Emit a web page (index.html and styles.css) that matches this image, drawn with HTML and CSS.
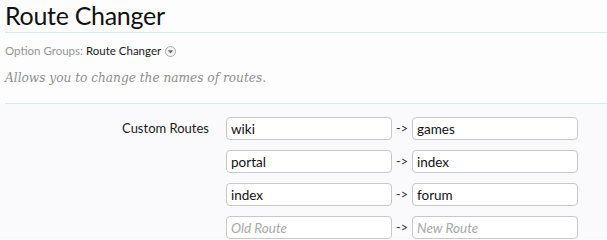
FILE: index.html
```html
<!DOCTYPE html>
<html>
<head>
<meta charset="utf-8">
<link rel="stylesheet" href="styles.css">
</head>
<body>
<div class="page">
  <h1 class="title">Route Changer</h1>
  <div class="groups">
    <span class="muted">Option Groups:</span>
    <span class="current">Route Changer</span>
    <span class="menu-icon"><svg width="11" height="11" viewBox="0 0 11 11"><circle cx="5.5" cy="5.5" r="5" fill="#f4f4f4" stroke="#a8a8a8" stroke-width="1"/><path d="M2.8 4.2 L8.2 4.2 L5.5 7.4 Z" fill="#6a6a6a"/></svg></span>
  </div>
  <p class="desc">Allows you to change the names of routes.</p>
  <div class="form">
    <div class="ctrl-row">
      <div class="label">Custom Routes</div>
      <div class="routes">
        <div class="route"><input class="field" value="wiki"><span class="arrow">-&gt;</span><input class="field" value="games"></div>
        <div class="route"><input class="field" value="portal"><span class="arrow">-&gt;</span><input class="field" value="index"></div>
        <div class="route"><input class="field" value="index"><span class="arrow">-&gt;</span><input class="field" value="forum"></div>
        <div class="route"><input class="field" placeholder="Old Route"><span class="arrow">-&gt;</span><input class="field" placeholder="New Route"></div>
      </div>
    </div>
  </div>
</div>
</body>
</html>
```
FILE: styles.css
```css
html, body {
  margin: 0;
  padding: 0;
  background: #fdfdfe;
  font-family: Lato, "Open Sans", sans-serif;
  color: #141414;
}
.page {
  padding-left: 5px;
}
.title {
  margin: 0;
  font-weight: normal;
  font-size: 25px;
  letter-spacing: -0.3px;
  line-height: 30px;
  height: 32px;
  border-bottom: 1px solid #d8ebf0;
  color: #111;
}
.groups {
  margin-top: 10px;
  font-size: 11.5px;
  line-height: 16px;
  display: flex;
  align-items: center;
  gap: 3px;
}
.muted { color: #969696; }
.current { color: #1a1a1a; }
.menu-icon { display: inline-flex; margin-left: 1px; }
.desc {
  margin: 9px 0 0;
  font-family: "DejaVu Serif Condensed", "DejaVu Serif", serif;
  font-style: italic;
  font-size: 13.5px;
  line-height: 18px;
  color: #8e8e8e;
  height: 35px;
  border-bottom: 1px solid #d8ebf0;
}
.form {
  background: #fafafc;
  margin-left: -5px;
  padding-top: 13px;
}
.ctrl-row {
  display: flex;
}
.label {
  width: 226px;
  padding-right: 17px;
  box-sizing: border-box;
  text-align: right;
  font-size: 13px;
  line-height: 18px;
  padding-top: 2px;
  color: #1a1a1a;
}
.routes {
  display: flex;
  flex-direction: column;
  gap: 10px;
}
.route {
  display: flex;
  align-items: center;
}
.field {
  width: 166px;
  height: 23px;
  box-sizing: border-box;
  border: 1px solid #c8c8c8;
  border-radius: 4px;
  background: #fff;
  font-family: Lato, "Open Sans", sans-serif;
  font-size: 13.5px;
  color: #111;
  padding: 0 4px;
  margin: 0;
  outline: none;
}
.field::placeholder {
  color: #a8a8a8;
  font-style: italic;
}
.arrow {
  width: 20px;
  text-align: center;
  font-size: 12.5px;
  color: #333;
}
```
